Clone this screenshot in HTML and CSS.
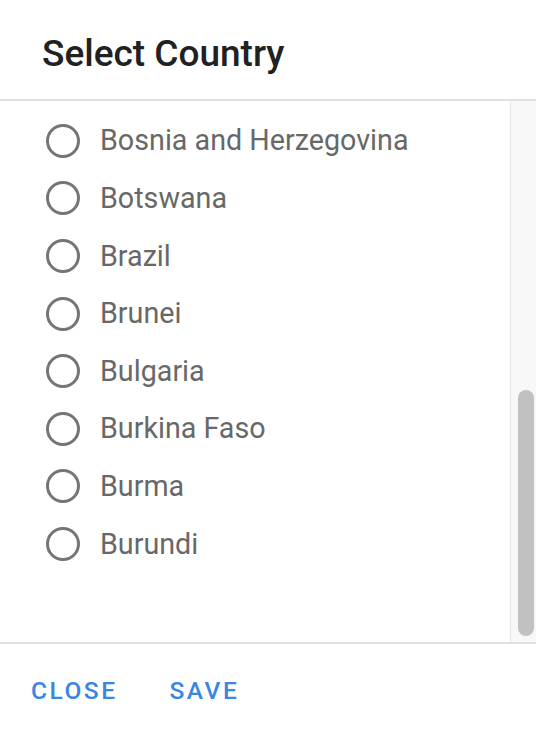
FILE: index.html
```html
<!DOCTYPE html>
<html lang="en">
<head>
<meta charset="utf-8">
<title>Select Country</title>
<link rel="stylesheet" href="styles.css">
</head>
<body>
<div class="dialog">
  <header class="dialog-header">
    <h1 class="dialog-title">Select Country</h1>
  </header>
  <div class="dialog-body">
    <ul class="options">
      <li class="option"><span class="radio"></span><span class="label">Bosnia and Herzegovina</span></li>
      <li class="option"><span class="radio"></span><span class="label">Botswana</span></li>
      <li class="option"><span class="radio"></span><span class="label">Brazil</span></li>
      <li class="option"><span class="radio"></span><span class="label">Brunei</span></li>
      <li class="option"><span class="radio"></span><span class="label">Bulgaria</span></li>
      <li class="option"><span class="radio"></span><span class="label">Burkina Faso</span></li>
      <li class="option"><span class="radio"></span><span class="label">Burma</span></li>
      <li class="option"><span class="radio"></span><span class="label">Burundi</span></li>
    </ul>
    <div class="scroll-track">
      <div class="scroll-thumb"></div>
    </div>
  </div>
  <footer class="dialog-footer">
    <button class="btn" type="button">Close</button>
    <button class="btn" type="button">Save</button>
  </footer>
</div>
</body>
</html>
```
FILE: styles.css
```css
html, body {
  margin: 0;
  padding: 0;
  height: 100%;
  background: #ffffff;
}
body {
  font-family: Roboto, "Liberation Sans", Arial, sans-serif;
}
.dialog {
  display: flex;
  flex-direction: column;
  height: 736px;
  width: 536px;
  background: #ffffff;
}
.dialog-header {
  height: 101px;
  box-sizing: border-box;
  border-bottom: 2px solid #e0e0e0;
  display: flex;
  align-items: center;
  padding: 8px 0 0 42px;
  flex: none;
}
.dialog-title {
  margin: 0;
  font-size: 37px;
  font-weight: 500;
  color: #212121;
  line-height: 1;
}
.dialog-body {
  flex: 1;
  display: flex;
  min-height: 0;
}
.options {
  list-style: none;
  margin: 0;
  padding: 11px 0 0 0;
  flex: 1;
}
.option {
  height: 57.6px;
  display: flex;
  align-items: center;
  padding-left: 46px;
}
.radio {
  width: 34px;
  height: 34px;
  box-sizing: border-box;
  border: 3px solid #757575;
  border-radius: 50%;
  flex: none;
}
.label {
  margin-left: 20px;
  font-size: 28.7px;
  color: #686868;
  line-height: 1;
}
.scroll-track {
  width: 26px;
  box-sizing: border-box;
  background: #f8f8f8;
  border-left: 1px solid #e6e6e6;
  display: flex;
  flex-direction: column;
  justify-content: flex-end;
  padding: 0 2px 6px 7px;
  flex: none;
}
.scroll-thumb {
  height: 246px;
  background: #c1c1c1;
  border-radius: 8px;
}
.dialog-footer {
  height: 94px;
  box-sizing: border-box;
  border-top: 2px solid #e0e0e0;
  display: flex;
  align-items: center;
  gap: 52px;
  padding: 2px 0 0 31px;
  flex: none;
}
.btn {
  background: none;
  border: none;
  padding: 0;
  font-family: Roboto, "Liberation Sans", Arial, sans-serif;
  font-size: 24.5px;
  font-weight: 500;
  text-transform: uppercase;
  letter-spacing: 2.5px;
  color: #3b86df;
  cursor: pointer;
  line-height: 1;
}
```
